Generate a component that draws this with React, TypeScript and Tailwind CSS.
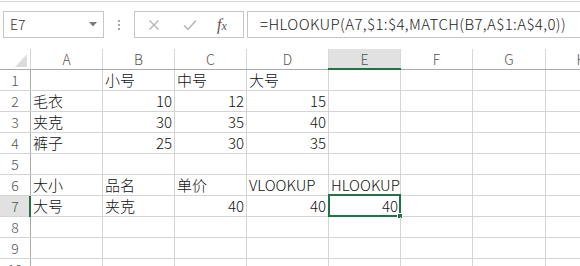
import React from "react";

const FONT = { fontFamily: '"Noto Sans CJK SC", "Noto Sans", sans-serif' };

const colNames = ["A", "B", "C", "D", "E", "F", "G", "H"];
const colW = ["w-[72px]", "w-[72px]", "w-[72px]", "w-[82px]", "w-[72px]", "w-[72px]", "w-[73px]", "w-[72px]"];

type Cell = string | number | undefined;
const data: Cell[][] = [
  ["", "小号", "中号", "大号"],
  ["毛衣", 10, 12, 15],
  ["夹克", 30, 35, 40],
  ["裤子", 25, 30, 35],
  [],
  ["大小", "品名", "单价", "VLOOKUP", "HLOOKUP"],
  ["大号", "夹克", 40, 40, 40],
  [],
  [],
  [],
];

function FormulaBar() {
  return (
    <div className="h-[49px] w-full shrink-0 bg-white">
      <div className="h-[1px]" />
      <div className="h-[1px] bg-[#d6d6d6]" />
      <div className="flex items-center pt-[9px]">
        <div className="ml-[3px] flex h-[27px] w-[101px] items-center justify-between border border-[#c6c6c6] bg-white pl-[6px] pr-[6px] text-[14px] font-light text-[#333]">
          <span>E7</span>
          <svg width="8" height="5" viewBox="0 0 8 5">
            <polygon points="0,0 8,0 4,4.5" fill="#7a7a7a" />
          </svg>
        </div>
        <div className="ml-[13px] flex h-[27px] w-[4px] flex-col items-center justify-center gap-[2px]">
          <div className="h-[2px] w-[2px] bg-[#a8a8a8]" />
          <div className="h-[2px] w-[2px] bg-[#a8a8a8]" />
          <div className="h-[2px] w-[2px] bg-[#a8a8a8]" />
        </div>
        <div className="ml-[13px] flex h-[27px] w-[110px] items-center border border-[#c6c6c6] bg-white">
          <svg className="ml-[13px]" width="12" height="12" viewBox="0 0 12 12">
            <path d="M1.5 1.5 L10.5 10.5 M10.5 1.5 L1.5 10.5" stroke="#b5b5b5" strokeWidth="1.4" />
          </svg>
          <svg className="ml-[23px]" width="14" height="12" viewBox="0 0 14 12">
            <path d="M1 6.5 L5 10.5 L13 1.5" stroke="#b5b5b5" strokeWidth="1.5" fill="none" />
          </svg>
          <span
            className="ml-[20px] text-[16px] italic text-[#555]"
            style={{ fontFamily: '"Liberation Serif", serif' }}
          >
            f<span className="text-[12px]">x</span>
          </span>
        </div>
        <div className="ml-[3px] flex h-[27px] flex-1 items-center border border-r-0 border-[#c6c6c6] bg-white pl-[12px] text-[15px] font-light tracking-[0.4px] text-[#222]">
          =HLOOKUP(A7,$1:$4,MATCH(B7,A$1:A$4,0))
        </div>
      </div>
    </div>
  );
}

function HeaderRow() {
  return (
    <div className="flex h-[21px] shrink-0 border-b border-[#ababab]">
      <div className="relative w-[31px] shrink-0 border-r border-[#d4d4d4]">
        <svg className="absolute bottom-[2px] right-[3px]" width="12" height="13" viewBox="0 0 12 13">
          <polygon points="12,0 12,13 0,13" fill="#dcdcdc" />
        </svg>
      </div>
      {colNames.map((c, i) => {
        const sel = c === "E";
        return (
          <div
            key={c}
            className={
              colW[i] +
              " relative flex shrink-0 items-center justify-center border-r border-[#d8d8d8] text-[14px] font-light " +
              (sel ? "bg-[#e1e1e1] text-[#3a5f47]" : "text-[#555]")
            }
          >
            {c}
            {sel && <div className="absolute bottom-[-1px] left-[-1px] right-[-1px] h-[2px] bg-[#217346]" />}
          </div>
        );
      })}
    </div>
  );
}

function DataRow({ r, cells }: { r: number; cells: Cell[] }) {
  const selRow = r === 7;
  return (
    <div className="flex h-[21px] shrink-0 border-b border-[#d4d4d4]">
      <div
        className={
          "relative flex w-[31px] shrink-0 items-center justify-center border-r border-[#ababab] text-[14px] font-light " +
          (selRow ? "bg-[#e1e1e1] text-[#3a5f47]" : "text-[#555]")
        }
      >
        {r}
        {selRow && <div className="absolute bottom-[-1px] right-[-1px] top-0 w-[2px] bg-[#217346]" />}
      </div>
      {colNames.map((c, i) => {
        const v = cells[i];
        const isNum = typeof v === "number";
        const sel = selRow && c === "E";
        return (
          <div
            key={c}
            className={
              colW[i] +
              " relative flex shrink-0 items-end overflow-visible whitespace-nowrap border-r border-[#d4d4d4] px-[2px] pb-[1px] text-[15px] font-light leading-[19px] text-[#111] " +
              (isNum ? "justify-end" : "justify-start")
            }
          >
            {v !== undefined && v !== "" ? <span>{v}</span> : null}
            {sel && (
              <>
                <div className="pointer-events-none absolute left-[-1px] top-[-2px] h-[23px] w-[73px] border-2 border-[#217346]" />
                <div className="absolute bottom-[-3px] right-[-3px] h-[6px] w-[6px] border border-white bg-[#217346]" />
              </>
            )}
          </div>
        );
      })}
    </div>
  );
}

export default function App() {
  return (
    <div className="flex h-[266px] w-[580px] flex-col overflow-hidden bg-white" style={FONT}>
      <FormulaBar />
      <HeaderRow />
      {data.map((cells, i) => (
        <DataRow key={i} r={i + 1} cells={cells} />
      ))}
    </div>
  );
}
